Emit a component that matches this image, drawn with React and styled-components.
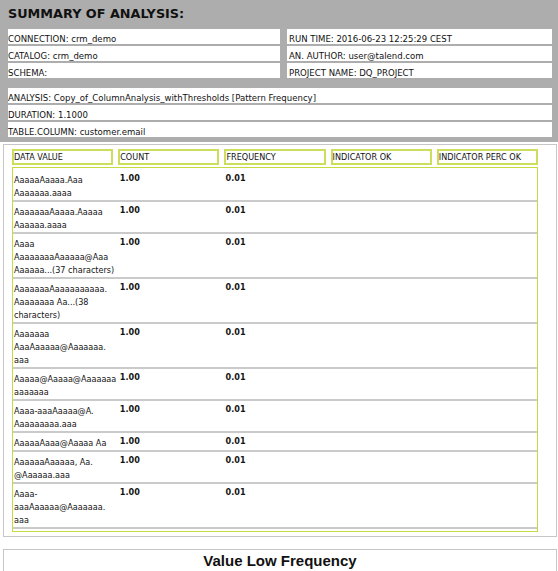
import React from "react";
import styled, { createGlobalStyle } from "styled-components";

const GlobalStyle = createGlobalStyle`
  html, body {
    margin: 0;
    padding: 0;
    background: #ffffff;
  }
  * { box-sizing: border-box; }
`;

const Page = styled.div`
  width: 558px;
  font-family: "DejaVu Sans Condensed", "DejaVu Sans", sans-serif;
  color: #141414;
`;

const Summary = styled.section`
  background: #adadad;
  padding: 0 6px 5px 8px;
`;

const Title = styled.h1`
  margin: 0;
  padding: 6px 0 8px;
  font-family: "DejaVu Sans", Verdana, sans-serif;
  font-weight: bold;
  font-size: 12.8px;
  line-height: 15px;
  color: #111;
`;

const InfoGrid = styled.div`
  display: grid;
  grid-template-columns: 272px 1fr;
  column-gap: 7px;
`;

const InfoColumn = styled.div`
  display: flex;
  flex-direction: column;
  gap: 2px;
  margin-top: ${(p) => p.$offset || 0}px;
`;

const InfoRow = styled.div`
  background: #ffffff;
  height: 15px;
  padding: 5px 0 0 ${(p) => p.$indent || 0}px;
  font-size: 9.5px;
  line-height: 10px;
  white-space: nowrap;
  color: #111;
`;

const TableSection = styled.section`
  margin: 2px 1px 0 3px;
  border: 1px solid #c6c6c6;
  padding: 4px 17px 4px 8px;
`;

const HeaderGrid = styled.div`
  display: grid;
  grid-template-columns: repeat(5, minmax(0, 1fr));
  column-gap: 5px;
  width: 526px;
`;

const HeaderCell = styled.div`
  height: 16px;
  border: 2px solid #cddd5c;
  font-size: 9px;
  line-height: 12px;
  white-space: nowrap;
  color: #111;
`;

const Body = styled.div`
  margin-top: 2px;
  width: 526px;
  border: 1px solid #c6da42;
  padding: 2px 0 2px;
`;

const Row = styled.div`
  display: grid;
  grid-template-columns: repeat(5, minmax(0, 1fr));
  column-gap: 5px;
  padding: 2px 0 0;
  border-bottom: 2px solid #cacaca;
`;

const Cell = styled.div`
  padding-left: 1px;
  font-size: 9px;
  line-height: 13px;
  font-weight: bold;
  color: #141414;
`;

const DataCell = styled(Cell)`
  padding-top: 2px;
  font-weight: normal;
  white-space: nowrap;
`;

const LowFrequency = styled.section`
  margin: 12px 1px 0 3px;
  height: 40px;
  border: 1px solid #c6c6c6;
  padding-top: 2px;
  text-align: center;
  font-family: "Liberation Sans", Arial, sans-serif;
  font-weight: bold;
  font-size: 15px;
  line-height: 18px;
  color: #111;
`;

const leftInfo = ["CONNECTION: crm_demo", "CATALOG: crm_demo", "SCHEMA:"];
const rightInfo = [
  "RUN TIME: 2016-06-23 12:25:29 CEST",
  "AN. AUTHOR: user@talend.com",
  "PROJECT NAME: DQ_PROJECT",
];
const fullInfo = [
  "ANALYSIS: Copy_of_ColumnAnalysis_withThresholds [Pattern Frequency]",
  "DURATION: 1.1000",
  "TABLE.COLUMN: customer.email",
];

const headers = ["DATA VALUE", "COUNT", "FREQUENCY", "INDICATOR OK", "INDICATOR PERC OK"];

const rows = [
  ["AaaaaAaaaa.Aaa", "Aaaaaaa.aaaa"],
  ["AaaaaaaAaaaa.Aaaaa", "Aaaaaa.aaaa"],
  ["Aaaa", "AaaaaaaaAaaaaa@Aaa", "Aaaaaa...(37 characters)"],
  ["AaaaaaaAaaaaaaaaaa.", "Aaaaaaaa Aa...(38", "characters)"],
  ["Aaaaaaa", "AaaAaaaaa@Aaaaaaa.", "aaa"],
  ["Aaaaa@Aaaaa@Aaaaaaa", "aaaaaaa"],
  ["Aaaa-aaaAaaaa@A.", "Aaaaaaaaa.aaa"],
  ["AaaaaAaaa@Aaaaa Aa"],
  ["AaaaaaAaaaaa, Aa.", "@Aaaaaa.aaa"],
  ["Aaaa-", "aaaAaaaaa@Aaaaaaa.", "aaa"],
];

export default function App() {
  return (
    <Page>
      <GlobalStyle />
      <Summary>
        <Title>SUMMARY OF ANALYSIS:</Title>
        <InfoGrid>
          <InfoColumn>
            {leftInfo.map((t) => (
              <InfoRow key={t}>{t}</InfoRow>
            ))}
          </InfoColumn>
          <InfoColumn>
            {rightInfo.map((t) => (
              <InfoRow key={t} $indent={2}>
                {t}
              </InfoRow>
            ))}
          </InfoColumn>
        </InfoGrid>
        <InfoColumn $offset={10}>
          {fullInfo.map((t) => (
            <InfoRow key={t}>{t}</InfoRow>
          ))}
        </InfoColumn>
      </Summary>

      <TableSection>
        <HeaderGrid>
          {headers.map((h) => (
            <HeaderCell key={h}>{h}</HeaderCell>
          ))}
        </HeaderGrid>
        <Body>
          {rows.map((lines, i) => (
            <Row key={i}>
              <DataCell>
                {lines.map((l, j) => (
                  <div key={j}>{l}</div>
                ))}
              </DataCell>
              <Cell>1.00</Cell>
              <Cell>0.01</Cell>
              <Cell />
              <Cell />
            </Row>
          ))}
        </Body>
      </TableSection>

      <LowFrequency>Value Low Frequency</LowFrequency>
    </Page>
  );
}
